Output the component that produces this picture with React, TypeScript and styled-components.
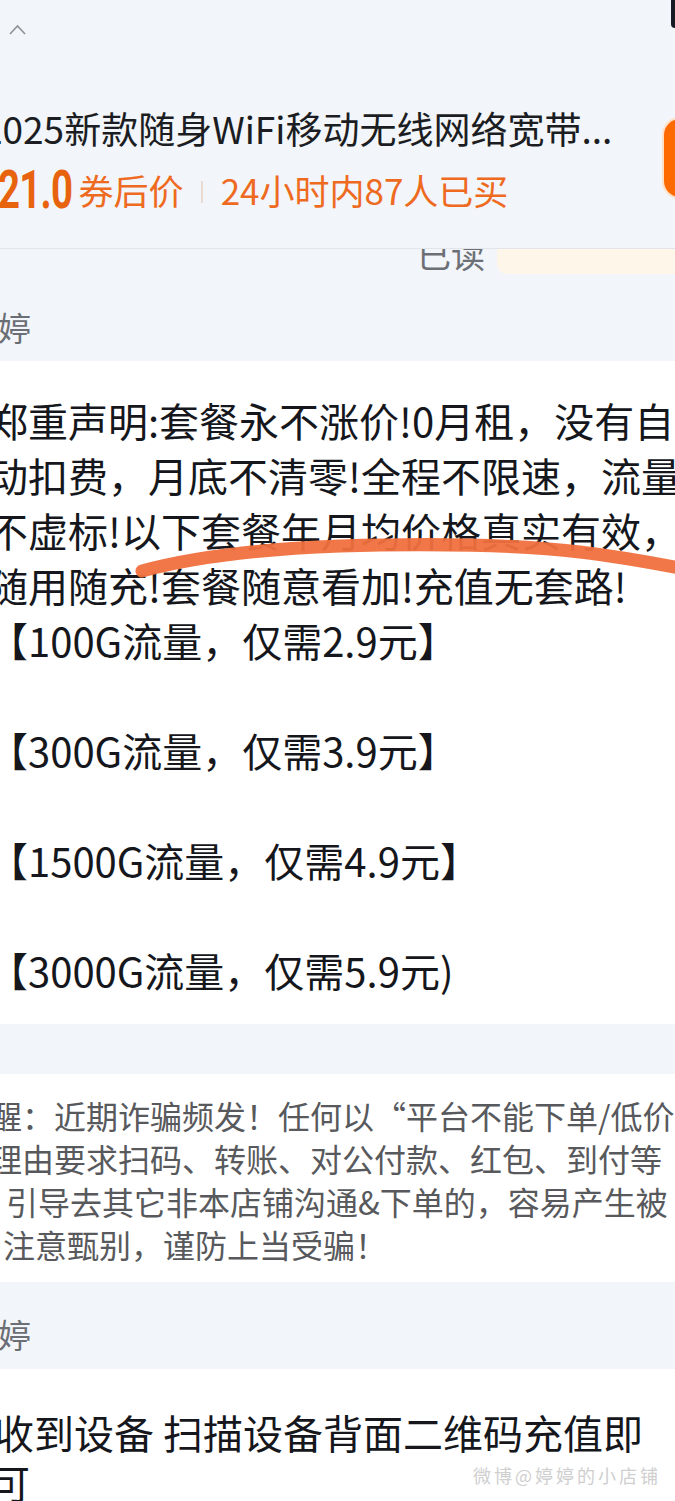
import React from "react";
import styled, { createGlobalStyle } from "styled-components";

const GlobalStyle = createGlobalStyle`
  body {
    margin: 0;
    background: #ffffff;
    font-family: "Noto Sans CJK SC", "Noto Sans", sans-serif;
    overflow-x: hidden;
  }
`;

const Page = styled.div`
  width: 675px;
  overflow: hidden;
`;

const Header = styled.div`
  background: #f2f5f9;
  border-bottom: 1px solid #e1e4e9;
  height: 249px;
  box-sizing: border-box;
`;

const TopRow = styled.div`
  display: flex;
  justify-content: space-between;
  align-items: flex-start;
  height: 70px;
`;

const Chevron = styled.svg`
  margin: 22px 0 0 8px;
  width: 19px;
  height: 14px;
`;

const CornerTab = styled.div`
  width: 10px;
  height: 28px;
  margin-right: -6px;
  background: #151a24;
  border-radius: 0 0 4px 4px;
`;

const ProductRow = styled.div`
  display: flex;
  align-items: center;
  margin-top: 36px;
`;

const Info = styled.div`
  flex: 1;
  margin-left: -18px;
  min-width: 0;
`;

const Title = styled.div`
  font-size: 37px;
  line-height: 44px;
  color: #1b1d22;
  white-space: nowrap;
`;

const PriceRow = styled.div`
  display: flex;
  align-items: center;
  height: 48px;
  margin-top: 16px;
  margin-left: 16px;
  color: #ee6a1e;
`;

const Amount = styled.span`
  display: inline-block;
  font-family: Roboto, "Liberation Sans", sans-serif;
  font-weight: 700;
  font-size: 54px;
  line-height: 48px;
  color: #e8630d;
  transform: scaleX(0.71);
  transform-origin: left center;
  margin-right: -24px;
  letter-spacing: -1px;
`;

const PriceNote = styled.span`
  font-size: 35px;
  line-height: 48px;
`;

const Divider = styled.span`
  width: 2px;
  height: 22px;
  background: #eadbd0;
  margin: 4px 18px 0 17px;
`;

const BuyButton = styled.div`
  flex-shrink: 0;
  width: 32px;
  height: 78px;
  margin-right: -21px;
  margin-top: -4px;
  border-radius: 16px;
  background: #ff6a00;
  box-shadow: 0 0 0 2px #ffe0c6;
`;

const Meta = styled.div`
  background: #f2f5f9;
`;

const ReadRow = styled.div`
  display: flex;
  justify-content: flex-end;
  align-items: flex-start;
  height: 25px;
  overflow: hidden;
`;

const ReadText = styled.span`
  font-size: 34px;
  line-height: 34px;
  color: #6c6f75;
  margin-top: -12px;
  margin-right: 12px;
`;

const CreamBox = styled.div`
  width: 178px;
  height: 25px;
  background: #fff6ea;
  border-bottom-left-radius: 10px;
`;

const NameRow = styled.div<{ $top: number; $bottom: number }>`
  padding: ${(p) => p.$top}px 0 ${(p) => p.$bottom}px;
  font-size: 33px;
  line-height: 32px;
  color: #6b6e74;
  background: #f2f5f9;
`;

const NameText = styled.span`
  margin-left: -2px;
`;

const Card = styled.div<{ $top: number; $bottom: number }>`
  position: relative;
  background: #ffffff;
  padding: ${(p) => p.$top}px 0 ${(p) => p.$bottom}px;
`;

const BodyLine = styled.div<{ $indent?: number }>`
  font-size: 40px;
  line-height: 55px;
  height: 55px;
  color: #15171c;
  white-space: nowrap;
  margin-left: ${(p) => p.$indent ?? -12}px;
`;

const NoticeLine = styled.div<{ $indent?: number }>`
  font-size: 32px;
  line-height: 43px;
  color: #58595c;
  white-space: nowrap;
  margin-left: ${(p) => p.$indent ?? -10}px;
`;

const FinalLine = styled.div<{ $indent?: number }>`
  font-size: 40px;
  line-height: 50px;
  color: #15171c;
  white-space: nowrap;
  margin-left: ${(p) => p.$indent ?? -6}px;
`;

const Gap = styled.div`
  height: 50px;
  background: #f2f5f9;
`;

const Scribble = styled.svg`
  position: absolute;
  left: 0;
  top: 0;
  width: 675px;
  height: 300px;
  pointer-events: none;
`;

const FinalLast = styled.div`
  display: flex;
  justify-content: space-between;
  align-items: center;
`;

const Watermark = styled.span`
  font-size: 18px;
  line-height: 22px;
  color: #cfcfcf;
  letter-spacing: 3px;
  margin-right: 14px;
  margin-top: -14px;
`;

const bodyLines = [
  "郑重声明:套餐永不涨价!0月租，没有自",
  "动扣费，月底不清零!全程不限速，流量",
  "不虚标!以下套餐年月均价格真实有效，",
  "随用随充!套餐随意看加!充值无套路!",
  "【100G流量，仅需2.9元】",
  "",
  "【300G流量，仅需3.9元】",
  "",
  "【1500G流量，仅需4.9元】",
  "",
  "【3000G流量，仅需5.9元)",
];

const noticeLines: { text: string; indent?: number }[] = [
  { text: "醒：近期诈骗频发！任何以“平台不能下单/低价" },
  { text: "理由要求扫码、转账、对公付款、红包、到付等" },
  { text: "引导去其它非本店铺沟通&下单的，容易产生被", indent: 6 },
  { text: "注意甄别，谨防上当受骗！", indent: 3 },
];

export default function App() {
  return (
    <Page>
      <GlobalStyle />
      <Header>
        <TopRow>
          <Chevron viewBox="0 0 19 14">
            <path d="M2 12 L9.5 4 L17 12" fill="none" stroke="#8d9198" strokeWidth="1.6" />
          </Chevron>
          <CornerTab />
        </TopRow>
        <ProductRow>
          <Info>
            <Title>2025新款随身WiFi移动无线网络宽带...</Title>
            <PriceRow>
              <Amount>21.0</Amount>
              <PriceNote>券后价</PriceNote>
              <Divider />
              <PriceNote>24小时内87人已买</PriceNote>
            </PriceRow>
          </Info>
          <BuyButton />
        </ProductRow>
      </Header>

      <Meta>
        <ReadRow>
          <ReadText>已读</ReadText>
          <CreamBox />
        </ReadRow>
        <NameRow $top={37} $bottom={18}>
          <NameText>婷</NameText>
        </NameRow>
      </Meta>

      <Card $top={32} $bottom={26}>
        {bodyLines.map((line, i) => (
          <BodyLine key={i}>{line}</BodyLine>
        ))}
        <Scribble viewBox="0 0 675 300">
          <path
            d="M142 210 C 190 197, 260 188, 340 185 C 430 182, 520 184, 580 191 C 630 197, 670 205, 700 211"
            fill="none"
            stroke="#f0703e"
            strokeWidth="13"
            strokeLinecap="round"
            opacity="0.95"
          />
        </Scribble>
      </Card>

      <Gap />

      <Card $top={20} $bottom={16}>
        {noticeLines.map((l, i) => (
          <NoticeLine key={i} $indent={l.indent}>
            {l.text}
          </NoticeLine>
        ))}
      </Card>

      <NameRow $top={36} $bottom={19}>
        <NameText>婷</NameText>
      </NameRow>

      <Card $top={38} $bottom={10}>
        <FinalLine>收到设备 扫描设备背面二维码充值即</FinalLine>
        <FinalLast>
          <FinalLine $indent={-10}>可</FinalLine>
          <Watermark>微博@婷婷的小店铺</Watermark>
        </FinalLast>
      </Card>
    </Page>
  );
}
